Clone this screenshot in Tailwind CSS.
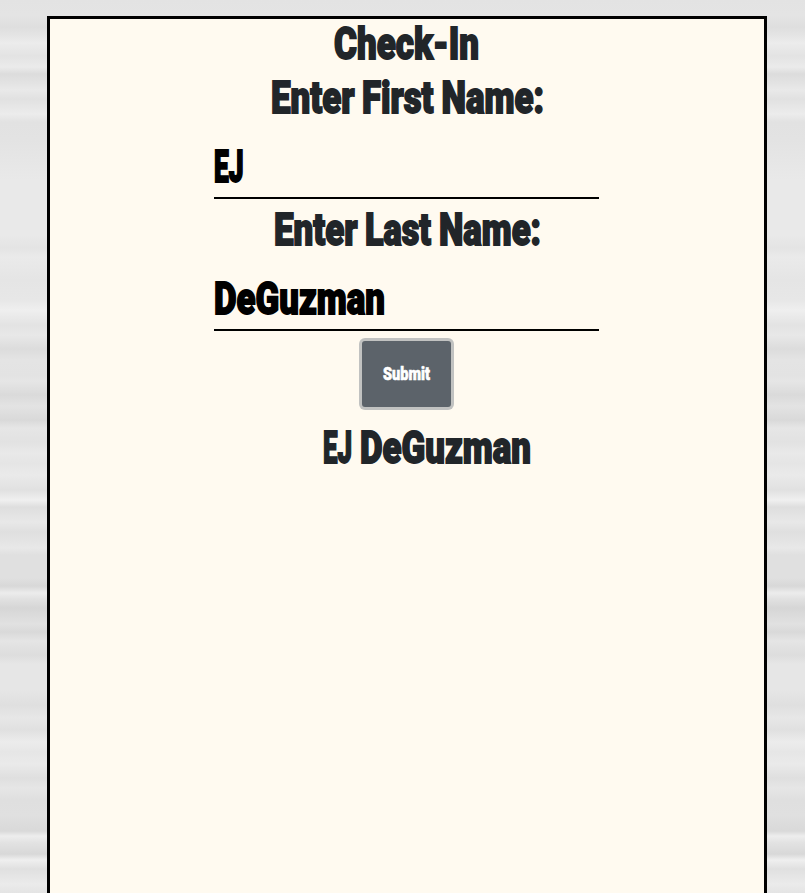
<!DOCTYPE html>
<html lang="en">
<head>
<meta charset="utf-8">
<title>Check-In</title>
<script src="https://cdn.jsdelivr.net/npm/@tailwindcss/browser@4"></script>
</head>
<body class="h-[893px] overflow-hidden pt-4 pl-[47px] bg-[linear-gradient(180deg,#e3e3e3_0px,#e4e4e4_15px,#dedede_27px,#e4e4e4_35px,#ececec_43px,#e3e3e3_56px,#ebebeb_67px,#dcdcdc_74px,#e2e2e2_82px,#e9e9e9_90px,#e1e1e1_99px,#ececec_114px,#e2e2e2_122px,#e3e3e3_140px,#e9e9e9_180px,#e9e9e9_235px,#e4e4e4_248px,#eaeaea_257px,#e5e5e5_280px,#e7e7e7_300px,#efefef_310px,#e3e3e3_325px,#e8e8e8_335px,#dcdcdc_349px,#e4e4e4_360px,#e3e3e3_375px,#e6e6e6_381px,#dadada_395px,#e3e3e3_406px,#d9d9d9_420px,#e6e6e6_428px,#e2e2e2_442px,#e9e9e9_453px,#e5e5e5_463px,#eaeaea_475px,#e1e1e1_490px,#f0f0f0_500px,#dedede_507px,#e8e8e8_522px,#dfdfdf_532px,#e8e8e8_548px,#e0e0e0_555px,#e0e0e0_578px,#d8d8d8_586px,#ececec_593px,#e1e1e1_599px,#d6d6d6_608px,#e1e1e1_624px,#d9d9d9_632px,#e5e5e5_641px,#dddddd_655px,#e6e6e6_664px,#e6e6e6_690px,#dfdfdf_705px,#e7e7e7_718px,#e0e0e0_730px,#ececec_742px,#e6e6e6_752px,#eaeaea_764px,#dfdfdf_778px,#e6e6e6_788px,#dfdfdf_800px,#e0e0e0_815px,#d9d9d9_831px,#ededed_836px,#e2e2e2_843px,#d8d8d8_854px,#efefef_860px,#e0e0e0_869px,#ebebeb_884px,#e4e4e4_893px)]">
<main class="w-[720px] h-[877px] border-[3px] border-b-0 border-black bg-[#fffaf0] font-[Roboto,sans-serif] font-black text-[44px]">
  <h1><svg class="block overflow-visible w-[714px] h-[54px] fill-[#212529] stroke-[#212529]" stroke-width="1.8"><text x="284" y="39.5" textLength="145" lengthAdjust="spacingAndGlyphs">Check-In</text></svg></h1>
  <h2><svg class="block overflow-visible w-[714px] h-[54px] fill-[#212529] stroke-[#212529]" stroke-width="1.8"><text x="221" y="39.5" textLength="83.500" lengthAdjust="spacingAndGlyphs">Enter</text><text x="312" y="39.5" textLength="71.500" lengthAdjust="spacingAndGlyphs">First</text><text x="391.500" y="39.5" textLength="102.500" lengthAdjust="spacingAndGlyphs">Name:</text></svg></h2>
  <div class="ml-[164px] w-[385px] h-[72px] border-b-2 border-black"><svg class="block overflow-visible w-full h-[70px]" stroke="black" stroke-width="2"><text x="0" y="54.5" textLength="29.500" lengthAdjust="spacingAndGlyphs">EJ</text></svg></div>
  <h2 class="mt-1.5"><svg class="block overflow-visible w-[714px] h-[54px] fill-[#212529] stroke-[#212529]" stroke-width="1.8"><text x="224" y="39.5" textLength="83.500" lengthAdjust="spacingAndGlyphs">Enter</text><text x="315" y="39.5" textLength="66" lengthAdjust="spacingAndGlyphs">Last</text><text x="389" y="39.5" textLength="102" lengthAdjust="spacingAndGlyphs">Name:</text></svg></h2>
  <div class="ml-[164px] w-[385px] h-[72px] border-b-2 border-black"><svg class="block overflow-visible w-full h-[70px]" stroke="black" stroke-width="1.8"><text x="0" y="54.5" textLength="171" lengthAdjust="spacingAndGlyphs">DeGuzman</text></svg></div>
  <button class="block ml-[312px] mt-2.5 w-[89px] h-[66px] rounded-[3px] bg-[#5c636a] ring-[3px] ring-[#c1c2c1]"><svg class="block w-full h-full fill-white stroke-white text-[18px]" stroke-width="0.6"><text x="21" y="39" textLength="47" lengthAdjust="spacingAndGlyphs">Submit</text></svg></button>
  <h2 class="mt-4"><svg class="block overflow-visible w-[714px] h-[54px] fill-[#212529] stroke-[#212529]" stroke-width="1.8"><text x="273" y="39.5" textLength="29" lengthAdjust="spacingAndGlyphs">EJ</text><text x="310" y="39.5" textLength="171" lengthAdjust="spacingAndGlyphs">DeGuzman</text></svg></h2>
</main>
</body>
</html>
